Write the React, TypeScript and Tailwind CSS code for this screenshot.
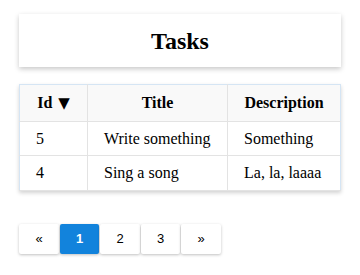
const tasks = [
    { id: 5, title: 'Write something', description: 'Something' },
    { id: 4, title: 'Sing a song', description: 'La, la, laaaa' },
];

const pages = [
    { label: '«', w: 'w-[40px]' },
    { label: '1', w: 'w-[39px]' },
    { label: '2', w: 'w-[40px]' },
    { label: '3', w: 'w-[39px]' },
    { label: '»', w: 'w-[40px]' },
];

export default function App() {
    return (
        <div className="min-h-[275px] w-[360px] bg-white px-[19px] pt-[14px] font-['Liberation_Serif',serif] text-black">
            {/* Header card */}
            <div className="flex h-[53px] items-center justify-center bg-white shadow-[0_2px_5px_rgba(0,0,0,0.22)]">
                <h1 className="text-[24px] font-bold">Tasks</h1>
            </div>

            {/* Tasks table */}
            <table className="mt-[17px] w-full border-collapse border border-[#d5e5f4] text-[16px] shadow-[0_2px_4px_rgba(0,0,0,0.18)]">
                <thead>
                    <tr className="h-[37px] bg-[#f9f9f9]">
                        <th className="w-[68px] border-r border-b border-[#e3e3e3] text-center font-bold">
                            Id<span className="ml-[6px] font-['DejaVu_Sans',sans-serif] text-[15px] leading-none">▼</span>
                        </th>
                        <th className="w-[140px] border-r border-b border-[#e3e3e3] text-center font-bold">Title</th>
                        <th className="border-b border-[#e3e3e3] text-center font-bold">Description</th>
                    </tr>
                </thead>
                <tbody>
                    {tasks.map((task, i) => (
                        <tr key={task.id} className={i === 0 ? 'h-[34px]' : 'h-[35px]'}>
                            <td className="border-r border-b border-[#e3e3e3] pl-[16px]">{task.id}</td>
                            <td className="border-r border-b border-[#e3e3e3] pl-[16px]">{task.title}</td>
                            <td className="border-b border-[#e3e3e3] pl-[16px]">{task.description}</td>
                        </tr>
                    ))}
                </tbody>
            </table>

            {/* Pagination */}
            <div className="mt-[33px] flex gap-[1px] font-['Liberation_Sans',sans-serif] text-[13px]">
                {pages.map((p) => (
                    <button
                        key={p.label}
                        className={`flex h-[30px] ${p.w} items-center justify-center rounded-[2px] shadow-[0_1px_3px_rgba(0,0,0,0.25)] ${
                            p.label === '1' ? 'bg-[#1283dc] font-bold text-white' : 'bg-white text-black'
                        }`}
                    >
                        {p.label}
                    </button>
                ))}
            </div>
        </div>
    );
}
